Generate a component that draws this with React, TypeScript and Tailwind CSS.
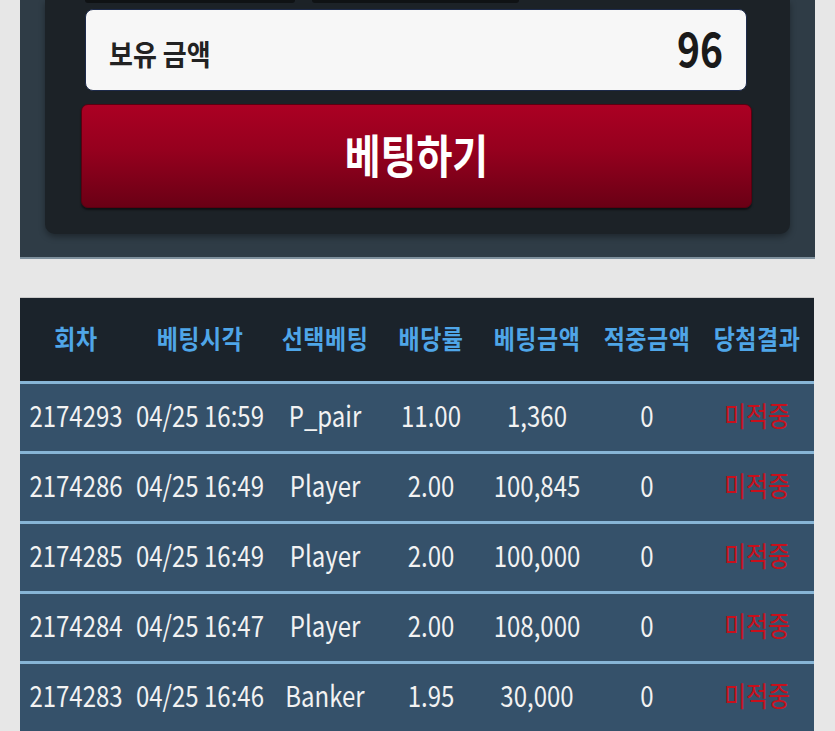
const rows = [
  ['2174293', '04/25 16:59', 'P_pair', '11.00', '1,360', '0', '미적중'],
  ['2174286', '04/25 16:49', 'Player', '2.00', '100,845', '0', '미적중'],
  ['2174285', '04/25 16:49', 'Player', '2.00', '100,000', '0', '미적중'],
  ['2174284', '04/25 16:47', 'Player', '2.00', '108,000', '0', '미적중'],
  ['2174283', '04/25 16:46', 'Banker', '1.95', '30,000', '0', '미적중'],
]

const heads = ['회차', '베팅시각', '선택베팅', '배당률', '베팅금액', '적중금액', '당첨결과']
const widths = ['w-[112px]', 'w-[136px]', 'w-[114px]', 'w-[98px]', 'w-[114px]', 'w-[106px]', 'w-[114px]']

export default function App() {
  return (
    <div className="min-h-screen bg-[#e7e7e7] pb-10" style={{ fontFamily: '"Noto Sans CJK KR", "Noto Sans", sans-serif' }}>
      {/* bet panel */}
      <div className="ml-[20px] w-[795px] bg-[#2f3c46] border-b-2 border-[#7e909d] px-[25px] pb-[23px]">
        <div className="bg-[#1c2227] rounded-b-[10px] pl-[36px] pr-[38px] pb-[26px] shadow-[0_3px_6px_rgba(0,0,0,0.35)]">
          <div className="flex gap-[17px] pl-[4px] h-[3px]">
            <div className="w-[210px] h-full bg-[#0f1214] rounded-b-md" />
            <div className="w-[207px] h-full bg-[#0f1214] rounded-b-md" />
          </div>

          <div className="mt-[6px] ml-[4px] mr-[5px] h-[82px] bg-[#f7f7f7] rounded-[8px] border border-[#1d2a4a] flex items-center justify-between pl-[23px] pr-[23px]">
            <span className="inline-block text-[26px] font-bold text-[#222] mt-[6px] scale-y-[1.12]">보유 금액</span>
            <span className="inline-block text-[39px] font-bold text-[#1a1a1a] leading-none scale-y-[1.2] -mt-[6px]">96</span>
          </div>

          <button className="mt-[13px] w-full h-[104px] rounded-[7px] border border-[#5a0010] text-white flex items-center justify-center bg-[linear-gradient(#ab0023,#95001e_45%,#6a0015)] shadow-[0_2px_2px_rgba(0,0,0,0.5)]">
            <span className="inline-block text-[39px] font-bold scale-y-[1.18] -mt-[6px]">베팅하기</span>
          </button>
        </div>
      </div>

      {/* history table */}
      <div className="ml-[20px] w-[794px] mt-[38px] border-t border-[#c9c9c9]">
        <div className="flex h-[83px] items-center bg-[#1b232b]">
          {heads.map((h, i) => (
            <div key={h} className={`${widths[i]} text-center`}>
              <span className="inline-block text-[23px] font-bold text-[#4fa6e8] tracking-[0.5px] scale-y-[1.12] -mt-[2px]">{h}</span>
            </div>
          ))}
        </div>
        {rows.map((r) => (
          <div key={r[0]} className="flex h-[70px] items-center bg-[#35516a] border-t-[3px] border-[#87b5d6]">
            {r.map((c, i) => (
              <div key={i} className={`${widths[i]} text-center whitespace-nowrap`}>
                <span
                  className={`inline-block text-[24px] scale-y-[1.2] -mt-[5px] ${i === 6 ? 'text-[#c8101c]' : 'text-[#f2f2f2]'}`}
                >
                  {c}
                </span>
              </div>
            ))}
          </div>
        ))}
      </div>
    </div>
  )
}
